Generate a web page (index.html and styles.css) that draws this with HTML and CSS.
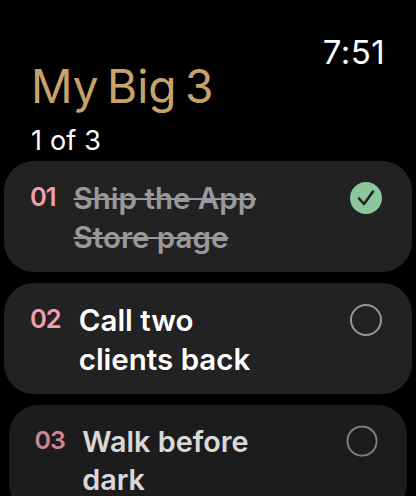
FILE: index.html
```html
<!DOCTYPE html>
<html lang="en">
<head>
<meta charset="utf-8">
<title>My Big 3</title>
<link rel="stylesheet" href="styles.css">
</head>
<body>
<main class="screen">
  <div class="status"><span class="time">7:51</span></div>
  <h1 class="title">My Big 3</h1>
  <p class="progress">1 of 3</p>
  <ul class="list">
    <li class="card">
      <span class="num">01</span>
      <span class="task done">Ship the App Store page</span>
      <svg class="mark" viewBox="0 0 32 32" aria-hidden="true"><circle cx="16" cy="16" r="16" fill="#8cc79b"/><path d="M9 16.5l5 5.5L23 9.5" fill="none" stroke="#222" stroke-width="2.6" stroke-linecap="round" stroke-linejoin="round"/></svg>
    </li>
    <li class="card">
      <span class="num">02</span>
      <span class="task">Call two clients back</span>
      <svg class="mark" viewBox="0 0 32 32" aria-hidden="true"><circle cx="16" cy="16" r="15" fill="none" stroke="#98989d" stroke-width="2"/></svg>
    </li>
    <li class="card far">
      <span class="num">03</span>
      <span class="task">Walk before dark</span>
      <svg class="mark" viewBox="0 0 32 32" aria-hidden="true"><circle cx="16" cy="16" r="15" fill="none" stroke="#98989d" stroke-width="2"/></svg>
    </li>
  </ul>
</main>
</body>
</html>
```
FILE: styles.css
```css
* { box-sizing: border-box; }
html, body { margin: 0; height: 100%; background: #000; overflow: hidden; }
body { font-family: Inter, "Liberation Sans", sans-serif; color: #fff; }
.screen { height: 496px; overflow: hidden; padding: 0 4px; }
.status { display: flex; justify-content: flex-end; padding: 40px 27px 0 0; }
.time { font-size: 33px; line-height: 24px; font-weight: 400; letter-spacing: 0.4px; }
.title { margin: 2px 0 0 27px; font-size: 46px; line-height: 40px; font-weight: 400; word-spacing: -4.5px; color: #c6a36a; }
.progress { margin: 20px 0 0 27px; font-size: 27px; line-height: 30px; font-weight: 400; word-spacing: 0.5px; color: #fff; }
.list { list-style: none; margin: 5px 0 0; padding: 0; display: flex; flex-direction: column; gap: 11px; }
.card { display: flex; align-items: flex-start; gap: 18px; height: 111px; padding: 18px 30px 0 26px; border-radius: 30px; background: #222; }
.num { flex: none; margin-top: 2px; font-size: 25.5px; line-height: 32px; font-weight: 600; letter-spacing: -1px; color: #f09fae; }
.task { flex: 1; max-width: 210px; font-size: 29.5px; line-height: 39px; font-weight: 600; color: #fff; }
.done { color: #98989d; text-decoration: line-through; text-decoration-thickness: 2px; }
.mark { flex: none; width: 32px; height: 32px; margin: 3px 0 0 auto; }
.far { transform: scale(0.975); transform-origin: top center; opacity: 0.85; }
```
